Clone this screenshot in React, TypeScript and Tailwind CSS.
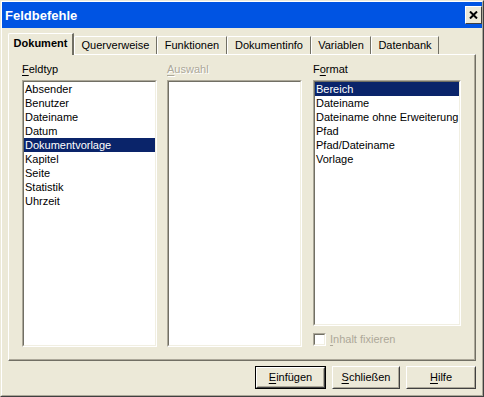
import React, { useState } from 'react';

const feldtypen = ['Absender', 'Benutzer', 'Dateiname', 'Datum', 'Dokumentvorlage', 'Kapitel', 'Seite', 'Statistik', 'Uhrzeit'];
const formate = ['Bereich', 'Dateiname', 'Dateiname ohne Erweiterung', 'Pfad', 'Pfad/Dateiname', 'Vorlage'];

const tabs = [
  { name: 'Dokument', w: 'w-[66px]' },
  { name: 'Querverweise', w: 'w-[83px]' },
  { name: 'Funktionen', w: 'w-[70px]' },
  { name: 'Dokumentinfo', w: 'w-[84px]' },
  { name: 'Variablen', w: 'w-[60px]' },
  { name: 'Datenbank', w: 'w-[68px]' },
];

// sunken 3D box like the classic windows listbox
const Sunken: React.FC<{ className?: string; children?: React.ReactNode }> = ({ className, children }) => (
  <div className={`border border-t-[#ACA899] border-l-[#ACA899] border-r-white border-b-white ${className ?? ''}`}>
    <div className="h-full w-full border border-t-[#716F64] border-l-[#716F64] border-r-[#F1EFE2] border-b-[#F1EFE2] bg-white">
      {children}
    </div>
  </div>
);

const ListBox: React.FC<{ items: string[]; selected: number; onSelect: (i: number) => void; className: string }> = ({
  items,
  selected,
  onSelect,
  className,
}) => (
  <Sunken className={className}>
    {items.map((item, i) => (
      <div
        key={item}
        onClick={() => onSelect(i)}
        className={`h-[14px] leading-[14px] pl-[1px] whitespace-nowrap ${i === selected ? 'bg-[#0A246A] text-white' : 'text-black'}`}
      >
        {item}
      </div>
    ))}
  </Sunken>
);

const Button: React.FC<{ label: string; hotkey: number; isDefault?: boolean; w: string }> = ({ label, hotkey, isDefault, w }) => {
  const face = (
    <div className="h-full w-full border border-t-white border-l-white border-r-[#404040] border-b-[#404040]">
      <div className="h-full w-full border border-t-[#ECE9D8] border-l-[#ECE9D8] border-r-[#ACA899] border-b-[#ACA899] flex items-center justify-center">
        <span>
          {label.slice(0, hotkey)}
          <span className="underline underline-offset-2">{label[hotkey]}</span>
          {label.slice(hotkey + 1)}
        </span>
      </div>
    </div>
  );
  return (
    <button type="button" className={`${w} h-[23px] p-0 text-black ${isDefault ? 'border border-black' : ''}`}>
      {face}
    </button>
  );
};

export default function App() {
  const [tab, setTab] = useState(0);
  const [feldtyp, setFeldtyp] = useState(4);
  const [format, setFormat] = useState(0);

  return (
    <div
      className="w-[484px] h-[397px] bg-[#ECE9D8] text-[11px] text-black select-none border border-t-[#ECE9D8] border-l-[#ECE9D8] border-r-[#404040] border-b-[#404040]"
      style={{ fontFamily: '"Liberation Sans", Arial, sans-serif' }}
    >
      <div className="h-full w-full flex flex-col border border-t-white border-l-white border-r-[#ACA899] border-b-[#ACA899]">
        {/* Title bar */}
        <div className="h-[26px] bg-[#0054E3] flex items-center justify-between pl-[3px] pr-[0px]">
          <span className="text-white font-bold text-[13px] leading-none">Feldbefehle</span>
          <div className="w-[17px] h-[18px] bg-[#ECE9D8] border border-t-white border-l-white border-r-[#404040] border-b-[#404040] flex items-center justify-center">
            <svg width="9" height="8" viewBox="0 0 9 8">
              <path d="M1 0.5 L8 7.5 M8 0.5 L1 7.5" stroke="#000" strokeWidth="2" />
            </svg>
          </div>
        </div>

        {/* Tabs */}
        <div className="h-[26px] flex items-end pl-[6px]">
          {tabs.map((t, i) =>
            i === tab ? (
              <div
                key={t.name}
                onClick={() => setTab(i)}
                className={`${t.w} h-[22px] -mb-[1px] relative z-10 bg-[#ECE9D8] border-l border-t border-white border-r-2 border-r-[#716F64] rounded-tl-[2px] flex items-center justify-center font-bold pb-[2px]`}
              >
                {t.name}
              </div>
            ) : (
              <div
                key={t.name}
                onClick={() => setTab(i)}
                className={`${t.w} h-[18px] border-l border-t border-white border-r border-r-[#716F64] rounded-tl-[2px] flex items-center justify-center`}
              >
                {t.name}
              </div>
            ),
          )}
        </div>

        {/* Panel */}
        <div className="mx-[6px] h-[307px] border border-t-white border-l-white border-r-[#716F64] border-b-[#716F64]">
          <div className="h-full w-full border-r border-b border-[#ACA899] flex gap-[10px] pt-[7px] pl-[13px]">
            <div className="w-[135px] flex flex-col">
              <div className="h-[14px] leading-[14px]">
                <span className="underline underline-offset-2">F</span>eldtyp
              </div>
              <ListBox items={feldtypen} selected={feldtyp} onSelect={setFeldtyp} className="mt-[4px] h-[267px]" />
            </div>
            <div className="w-[135px] flex flex-col">
              <div className="h-[14px] leading-[14px] text-[#ACA899] [text-shadow:1px_1px_0_#fff]">
                <span className="underline underline-offset-2">A</span>uswahl
              </div>
              <Sunken className="mt-[4px] h-[267px]" />
            </div>
            <div className="w-[148px] flex flex-col ml-[1px]">
              <div className="h-[14px] leading-[14px]">
                F<span className="underline underline-offset-2">o</span>rmat
              </div>
              <ListBox items={formate} selected={format} onSelect={setFormat} className="mt-[4px] h-[246px]" />
              <div className="mt-[7px] flex items-center gap-[4px]">
                <div className="w-[13px] h-[13px] border border-t-[#ACA899] border-l-[#ACA899] border-r-white border-b-white">
                  <div className="w-full h-full border border-t-[#716F64] border-l-[#716F64] border-r-[#F1EFE2] border-b-[#F1EFE2] bg-white" />
                </div>
                <span className="text-[#ACA899] leading-[13px]">
                  <span className="underline underline-offset-2">I</span>nhalt fixieren
                </span>
              </div>
            </div>
          </div>
        </div>

        {/* Buttons */}
        <div className="flex justify-end gap-[6px] pt-[5px] pr-[6px]">
          <Button label="Einfügen" hotkey={0} isDefault w="w-[71px]" />
          <Button label="Schließen" hotkey={0} w="w-[68px]" />
          <Button label="Hilfe" hotkey={0} w="w-[70px]" />
        </div>
      </div>
    </div>
  );
}
